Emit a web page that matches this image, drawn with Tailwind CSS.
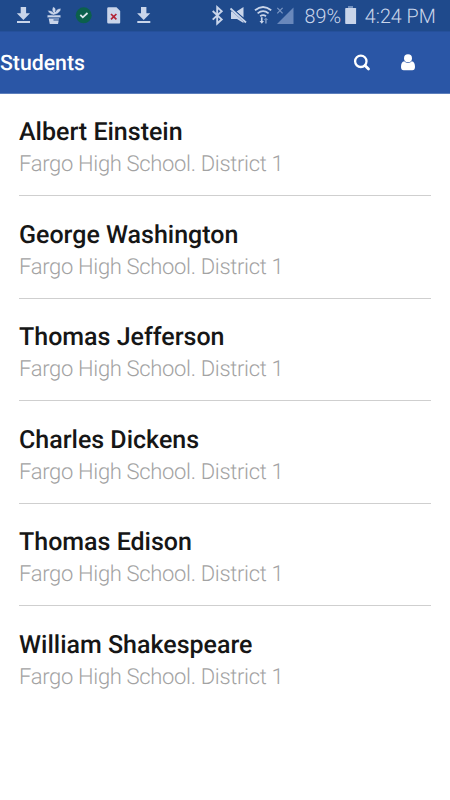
<!DOCTYPE html>
<html lang="en">
<head>
<meta charset="utf-8">
<title>Students</title>
<script src="https://cdn.jsdelivr.net/npm/@tailwindcss/browser@4"></script>
</head>
<body class="bg-white font-['Roboto',sans-serif] [text-rendering:geometricPrecision]">
<div class="w-[450px] h-[800px] overflow-hidden flex flex-col">
  <div class="h-[31px] shrink-0 bg-[#1f4a8c] text-[#c9d5ea] flex items-center">
    <svg class="w-[450px] h-[31px] shrink-0" viewBox="0 0 450 31" fill="#c9d5ea">
      <g id="dl"><path d="M20.700 7h5.400v6.200h3.900L23.400 20l-6.600-6.800h3.900z"/><path d="M17 21h13v2H17z"/></g>
      <use href="#dl" x="120.300"/>
      <path d="M47.500 15.200h13v2.600h-13zM48.600 18h10.600l-1.200 6h-8.200z"/>
      <path d="M53.800 15C51 14.500 48.800 13 47.600 10.500c2.500-.3 4.700.500 5.900 2.200-1.800-2-1.600-4.200-.2-6 2.300 1 3 3 2 5.300.8-2.300 2.900-3.700 5.700-3.500-.3 3.200-2.700 5.100-6 6z" stroke="#1f4a8c" stroke-width=".4"/>
      <path d="M53.500 19.600h6v1h-6zM47.500 17.600h13v.8h-13z" fill="#1f4a8c"/>
      <circle cx="83.700" cy="15.300" r="8" fill="#0b604c"/>
      <path d="M80.300 14.800l2.500 2.500 4.700-4.300" fill="none" stroke="#dce7ed" stroke-width="1.800"/>
      <path d="M108.500 7.300h8l3.700 3.700v11.500a1 1 0 0 1-1 1h-10.700a1.300 1.300 0 0 1-1.300-1.300V8.500a1.300 1.300 0 0 1 1.300-1.200z"/>
      <path d="M111 14l5.400 5.400M116.400 14l-5.400 5.400" stroke="#b22335" stroke-width="1.700"/>
      <path d="M212.700 11l9 8.400-4.500 4.100V7.100l4.500 4.200-9 8.300" fill="none" stroke="#c9d5ea" stroke-width="1.900"/>
      <path d="M231 11.500h4l8.500 8V23l-6.500-4h-6zM236.500 11.500l7-4.500v10.500z"/>
      <path d="M230.500 8l16 14.500" stroke="#1f4a8c" stroke-width="3"/>
      <path d="M230.500 8.500l15.500 14" stroke="#c9d5ea" stroke-width="1.800"/>
      <g fill="none" stroke="#c9d5ea" stroke-width="1.800"><path d="M255 10.300q8-6.600 16.200 0M257.600 13.400q5.500-4.500 11 0M260.200 16.300q3-2.400 5.800 0"/></g>
      <path d="M260.900 17.300h1.700v3.700h1.400l-2.200 2.700-2.300-2.700h1.400z"/>
      <path d="M265 23.500v-3.400h-1.300l2.200-2.600 2.200 2.600h-1.300v3.400z" fill="#7190bf"/>
      <path d="M293.500 7.500V24H277z" fill="#6988bb"/>
      <path d="M277.300 7.800l5.300 5.500M282.600 7.800l-5.300 5.500" stroke="#7b97c4" stroke-width="1.200"/>
      <path d="M348 6h5v2h-5z" fill="#7190bf"/><path d="M346 8h9.500a.6.600 0 0 1 .6.600V23.400a.6.600 0 0 1-.6.600H346a.8.800 0 0 1-.8-.8V8.800a.8.800 0 0 1 .8-.8z"/>
      <text x="304.500" y="23" font-size="20" textLength="36.500" lengthAdjust="spacingAndGlyphs" font-weight="350">89%</text>
      <text x="364.800" y="23" font-size="20" textLength="71" lengthAdjust="spacingAndGlyphs" font-weight="350">4:24 PM</text>
    </svg>
  </div>
  <header class="h-[63px] shrink-0 bg-[#2a56a6] border-t border-t-[#25509b] border-b border-b-[#5d7fbc] flex items-center text-white">
    <h1 class="text-[21.250px] leading-6 font-medium grow pt-[2px]">Students</h1>
    <svg class="w-[18px] h-[18px] mr-[29px]" viewBox="0 0 18 18" fill="none" stroke="#fff"><circle cx="7.800" cy="7.300" r="5.700" stroke-width="2.300"/><path d="M12 11.600l3.500 3.500" stroke-width="2.800" stroke-linecap="round"/></svg>
    <svg class="w-[16px] h-[18px] mr-[34px]" viewBox="0 0 16 18" fill="#fff"><circle cx="8" cy="4.300" r="4"/><path d="M4.300 7.300C2 7.700 1 9.900 1 12.900 1 14.900 2 16.200 3.700 16.200h8.600c1.700 0 2.700-1.300 2.700-3.300 0-3-1-5.200-3.300-5.600C9.700 9.500 6.300 9.500 4.300 7.300z"/></svg>
  </header>
  <main class="mx-[19px] flex flex-col text-[25px] leading-[30px] font-medium text-[#161616]">
    <section class="h-[102px] border-b border-[#cfcfcf] pt-[24px]"><h2>Albert Einstein</h2><p class="mt-[3px] text-[22px] leading-[28px] font-light text-[#a3a3a3] tracking-[-0.320px]">Fargo High School. District 1</p></section>
    <section class="h-[102.500px] border-b border-[#cfcfcf] pt-[24.500px]"><h2>George Washington</h2><p class="mt-[3px] text-[22px] leading-[28px] font-light text-[#a3a3a3] tracking-[-0.320px]">Fargo High School. District 1</p></section>
    <section class="h-[102.500px] border-b border-[#cfcfcf] pt-[24.500px]"><h2>Thomas Jefferson</h2><p class="mt-[3px] text-[22px] leading-[28px] font-light text-[#a3a3a3] tracking-[-0.320px]">Fargo High School. District 1</p></section>
    <section class="h-[102.500px] border-b border-[#cfcfcf] pt-[24.500px]"><h2>Charles Dickens</h2><p class="mt-[3px] text-[22px] leading-[28px] font-light text-[#a3a3a3] tracking-[-0.320px]">Fargo High School. District 1</p></section>
    <section class="h-[102.500px] border-b border-[#cfcfcf] pt-[24.500px]"><h2>Thomas Edison</h2><p class="mt-[3px] text-[22px] leading-[28px] font-light text-[#a3a3a3] tracking-[-0.320px]">Fargo High School. District 1</p></section>
    <section class="h-[102.500px] pt-[24.500px]"><h2>William Shakespeare</h2><p class="mt-[3px] text-[22px] leading-[28px] font-light text-[#a3a3a3] tracking-[-0.320px]">Fargo High School. District 1</p></section>
  </main>
</div>
</body>
</html>
